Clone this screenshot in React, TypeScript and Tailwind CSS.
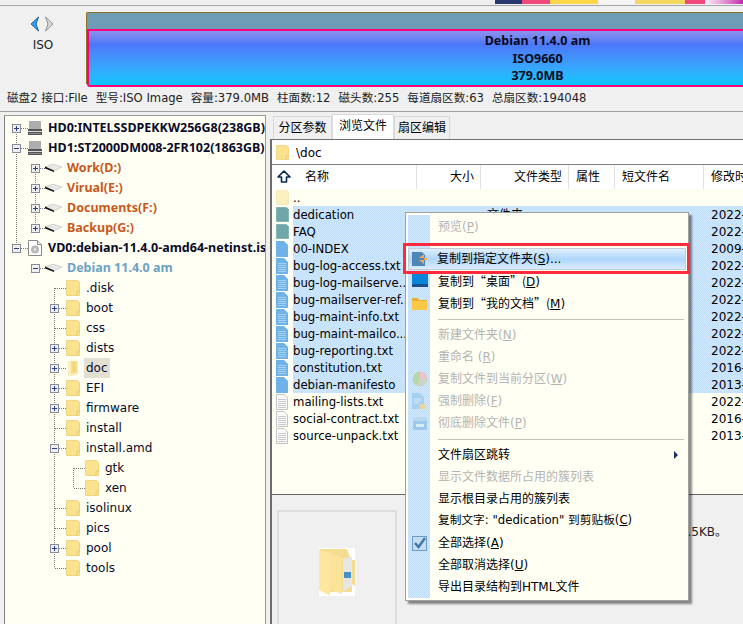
import type { ReactNode } from "react";

const font = "[font-family:'DejaVu_Sans','Noto_Sans_CJK_SC',sans-serif]";
const boldFont = "font-bold [font-family:'Noto_Sans','Noto_Sans_CJK_SC',sans-serif]";
const treeBold = `${boldFont} text-[12.5px]`;
const dotted = "[background:repeating-conic-gradient(#bfdefb_0_25%,#d2e9fd_0_50%)_0_0/2px_2px]";

const Folder = ({ size = 14, pale = false, tint = false }: { size?: number; pale?: boolean; tint?: boolean }) => (
  <svg width={size} height={size + 2} viewBox="0 0 14 16" className={pale ? "opacity-50" : ""}>
    <path d="M0.5 0.5H11.5L13.5 2.5V15.5H0.5Z" fill={tint ? "#6ea7a8" : "#fbe28f"} stroke={tint ? "#7fb2b4" : "#efd685"} />
    {!tint && <path d="M11 15.5V11.5Q12 10 13.5 11.5" fill="none" stroke="#e5c970" />}
  </svg>
);

const OpenFolder = () => (
  <svg width="14" height="16" viewBox="0 0 14 16">
    <path d="M2 1H12V14L6 16H2Z" fill="#fdeeb8" />
    <path d="M5 1H11V13H5Z" fill="#f9dc8a" />
    <path d="M7 2H9V12H7Z" fill="#f3d27c" />
  </svg>
);

const HardDisk = () => (
  <svg width="14" height="14" viewBox="0 0 14 14">
    <path d="M1 0H13V8H1Z" fill="#b8b8b8" />
    <path d="M1 1H13M1 3H13M1 5H13M1 7H13" stroke="#a2a2a2" />
    <path d="M0 8H14V14H0Z" fill="#555" />
    <path d="M0 10H14V11H0Z" fill="#d8d8d8" />
    <path d="M1 12H13V13H1Z" fill="#8a8a8a" />
  </svg>
);

const Partition = () => (
  <svg width="17" height="8" viewBox="0 0 17 8">
    <path d="M0 3L8 0L17 3L9 7Z" fill="#e8e8e8" stroke="#b0b0b0" strokeWidth="0.5" />
    <path d="M0 2.5L9 6.5V8L0 4.5Z" fill="#111" />
  </svg>
);

const IsoFile = () => (
  <svg width="14" height="16" viewBox="0 0 14 16">
    <path d="M0.5 0.5H9.5L13.5 4.5V15.5H0.5Z" fill="#fff" stroke="#8a8a8a" />
    <path d="M9.5 0.5V4.5H13.5" fill="#eee" stroke="#8a8a8a" />
    <circle cx="7" cy="9.5" r="4" fill="#b8b8b8" />
    <circle cx="7" cy="9.5" r="1.2" fill="#eee" />
  </svg>
);

const Connector = ({ exp, first, last, line }: { exp?: string; first?: boolean; last?: boolean; line?: boolean }) => {
  const dot = { stroke: "#777", strokeDasharray: "1 1" };
  return (
    <svg width="21" height="20" viewBox="0 0 21 20" className="shrink-0">
      {line && <line x1="9.5" y1={first ? 10 : 0} x2="9.5" y2={last ? 10 : 20} {...dot} />}
      <line x1="10" y1="10.5" x2="21" y2="10.5" {...dot} />
      {exp && (
        <>
          <rect x="5.5" y="6.5" width="8" height="8" fill="#f0f0f0" stroke="#8a8a9a" />
          <line x1="7" y1="10.5" x2="12" y2="10.5" stroke="#27408b" />
          {exp === "+" && <line x1="9.5" y1="8" x2="9.5" y2="13" stroke="#27408b" />}
        </>
      )}
    </svg>
  );
};

type TreeRow = {
  label: string;
  level: number;
  guides?: number[];
  exp?: string;
  first?: boolean;
  last?: boolean;
  line?: boolean;
  icon: ReactNode;
  cls?: string;
};

const folder = <Folder />;
const part = (
  <span className="-ml-[2px] flex">
    <Partition />
  </span>
);
const driveCls = `${treeBold} text-[#c8591d]`;

const treeRows: TreeRow[] = [
  { label: "HD0:INTELSSDPEKKW256G8(238GB)", level: 0, exp: "+", first: true, line: true, icon: <HardDisk />, cls: treeBold },
  { label: "HD1:ST2000DM008-2FR102(1863GB)", level: 0, exp: "-", line: true, icon: <HardDisk />, cls: treeBold },
  { label: "Work(D:)", level: 1, guides: [0], exp: "+", first: true, line: true, icon: part, cls: driveCls },
  { label: "Virual(E:)", level: 1, guides: [0], exp: "+", line: true, icon: part, cls: driveCls },
  { label: "Documents(F:)", level: 1, guides: [0], exp: "+", line: true, icon: part, cls: driveCls },
  { label: "Backup(G:)", level: 1, guides: [0], exp: "+", last: true, line: true, icon: part, cls: driveCls },
  { label: "VD0:debian-11.4.0-amd64-netinst.iso", level: 0, exp: "-", last: true, line: true, icon: <IsoFile />, cls: treeBold },
  { label: "Debian 11.4.0 am", level: 1, exp: "-", icon: part, cls: `${treeBold} text-[#6ca2c6]` },
  { label: ".disk", level: 2, first: true, line: true, icon: folder },
  { label: "boot", level: 2, exp: "+", line: true, icon: folder },
  { label: "css", level: 2, line: true, icon: folder },
  { label: "dists", level: 2, exp: "+", line: true, icon: folder },
  { label: "doc", level: 2, exp: "+", line: true, icon: <OpenFolder />, cls: "bg-[#e3e0d3]" },
  { label: "EFI", level: 2, exp: "+", line: true, icon: folder },
  { label: "firmware", level: 2, exp: "+", line: true, icon: folder },
  { label: "install", level: 2, line: true, icon: folder },
  { label: "install.amd", level: 2, exp: "-", line: true, icon: folder },
  { label: "gtk", level: 3, guides: [2], first: true, line: true, icon: folder },
  { label: "xen", level: 3, guides: [2], last: true, line: true, icon: folder },
  { label: "isolinux", level: 2, line: true, icon: folder },
  { label: "pics", level: 2, line: true, icon: folder },
  { label: "pool", level: 2, exp: "+", line: true, icon: folder },
  { label: "tools", level: 2, last: true, line: true, icon: folder },
];

const Tree = () => (
  <div className="ml-[4px] mt-[3px] w-[262px] shrink-0 overflow-hidden border-x border-t border-x-[#9a9a9a] border-t-[#9a9a9a] border-l-[#808080] bg-[#fffff3] pl-[2px] pt-[2px]">
    {treeRows.map((r) => (
      <div key={r.label} className="flex h-[20px] items-center whitespace-nowrap text-[12px] leading-[20px] text-[#0a0a2a]">
        <div className="flex shrink-0" style={{ width: r.level * 19 }}>
          {Array.from({ length: r.level }).map((_, i) => (
            <svg key={i} width="19" height="20" className="shrink-0">
              {(r.guides ?? []).includes(i) && <line x1="9.5" y1="0" x2="9.5" y2="20" stroke="#777" strokeDasharray="1 1" />}
            </svg>
          ))}
        </div>
        <Connector exp={r.exp} first={r.first} last={r.last} line={r.line} />
        <div className="flex h-[16px] w-[20px] shrink-0 items-center">{r.icon}</div>
        <span className={`-ml-[2px] px-[2px] ${r.cls ?? ""}`}>{r.label}</span>
      </div>
    ))}
  </div>
);

const BluePage = ({ lines = true }: { lines?: boolean }) => (
  <svg width="12" height="16" viewBox="0 0 12 16">
    <path d="M0 0H8L12 4V16H0Z" fill="#6db3e8" />
    {lines && <path d="M2 5.5H10M2 7.5H10M2 9.5H10M2 11.5H10M2 13.5H10" stroke="#a5d2f3" />}
  </svg>
);

const TextPage = () => (
  <svg width="12" height="16" viewBox="0 0 12 16">
    <path d="M0.5 0.5H8L11.5 4V15.5H0.5Z" fill="#fafafa" stroke="#c4c4c4" />
    <path d="M2 5.5H10M2 7.5H10M2 9.5H10M2 11.5H10M2 13.5H10" stroke="#c8c8c8" />
  </svg>
);

type FileRow = { name: string; date?: string; type?: string; sel?: boolean; icon: ReactNode };

const files: FileRow[] = [
  { name: "..", icon: <Folder size={13} pale /> },
  { name: "dedication", date: "2022-", type: "文件夹", sel: true, icon: <Folder size={13} tint /> },
  { name: "FAQ", date: "2022-", sel: true, icon: <Folder size={13} tint /> },
  { name: "00-INDEX", date: "2009-", sel: true, icon: <BluePage lines={false} /> },
  { name: "bug-log-access.txt", date: "2022-", sel: true, icon: <BluePage /> },
  { name: "bug-log-mailserve...", date: "2022-", sel: true, icon: <BluePage /> },
  { name: "bug-mailserver-ref...", date: "2022-", sel: true, icon: <BluePage /> },
  { name: "bug-maint-info.txt", date: "2022-", sel: true, icon: <BluePage /> },
  { name: "bug-maint-mailco...", date: "2022-", sel: true, icon: <BluePage /> },
  { name: "bug-reporting.txt", date: "2022-", sel: true, icon: <BluePage /> },
  { name: "constitution.txt", date: "2016-", sel: true, icon: <BluePage /> },
  { name: "debian-manifesto", date: "2013-", sel: true, icon: <BluePage lines={false} /> },
  { name: "mailing-lists.txt", date: "2022-", icon: <TextPage /> },
  { name: "social-contract.txt", date: "2016-", icon: <TextPage /> },
  { name: "source-unpack.txt", date: "2013-", icon: <TextPage /> },
];

const columns = [
  { label: "大小", w: "w-[64px]", cls: "justify-end pr-[6px]" },
  { label: "文件类型", w: "w-[88px]", cls: "justify-end pr-[6px]" },
  { label: "属性", w: "w-[46px]", cls: "pl-[7px]" },
  { label: "短文件名", w: "w-[89px]", cls: "pl-[7px]" },
];

const FileList = () => (
  <div className="flex-1 overflow-hidden bg-[#fffff3]">
    {files.map((f) => (
      <div key={f.name} className="flex h-[17px] items-center">
        <div className="flex w-[21px] shrink-0 justify-start pl-[4px]">{f.icon}</div>
        <div className={`flex h-full flex-1 items-center whitespace-nowrap text-black ${f.sel ? dotted : ""}`}>
          <span className="w-[194px] shrink-0 pt-[2px] text-[11.7px]">{f.name}</span>
          <span className="w-[224px] shrink-0 text-[12px]">{f.type}</span>
          <span className="text-[12px]">{f.date}</span>
        </div>
      </div>
    ))}
  </div>
);

const CopyToIcon = () => (
  <svg width="16" height="16" viewBox="0 0 16 16">
    <path d="M0 1H10L13 4V15H0Z" fill="#4f86b8" />
    <path d="M13 5L8 9H16V11H8L13 15Z" transform="translate(-1 -2)" fill="#f5a850" />
  </svg>
);

const DesktopIcon = () => (
  <svg width="16" height="15" viewBox="0 0 16 15">
    <path d="M0 0H16V12H0Z" fill="#0a84d8" />
    <path d="M0 10H16V13H0Z" fill="#1a4f90" />
  </svg>
);

const YellowOpen = () => (
  <svg width="16" height="13" viewBox="0 0 16 13">
    <path d="M0 1H6L7 3H15V5H0Z" fill="#e8ae2e" />
    <path d="M0 4H16L15 13H0Z" fill="#fcc846" />
  </svg>
);

const PieIcon = () => (
  <svg width="16" height="16" viewBox="0 0 16 16">
    <circle cx="8" cy="8" r="7.5" fill="#b9d6a8" />
    <path d="M8 8V0.5A7.5 7.5 0 0 1 15.5 8Z" fill="#e8c4cc" />
    <path d="M8 8H15.5A7.5 7.5 0 0 1 4 14Z" fill="#ccd4c4" />
  </svg>
);

const LockPageIcon = () => (
  <svg width="15" height="16" viewBox="0 0 15 16">
    <path d="M0 0H8L12 4V16H0Z" fill="#a8d0f0" />
    <path d="M2 6H9M2 8H9M2 10H7" stroke="#d4e8f8" />
    <path d="M8 11H14V16H8Z" fill="#e8d8a0" />
  </svg>
);

const BasketIcon = () => (
  <svg width="16" height="14" viewBox="0 0 16 14">
    <path d="M2 1H14L16 5H0Z" fill="#b8d8f0" />
    <path d="M1 5H15V14H1Z" fill="#9cc8ec" />
    <path d="M4 8H12V11H4Z" fill="#d8ecfa" />
  </svg>
);

const CheckIcon = () => (
  <svg width="15" height="15" viewBox="0 0 15 15">
    <rect x="0.5" y="0.5" width="14" height="14" fill="#c6dcf0" stroke="#6c9cc8" />
    <path d="M3 7L6.5 11L13 2" fill="none" stroke="#3f78ae" strokeWidth="2.4" />
  </svg>
);

type MenuEntry =
  | { sep: true }
  | {
      text: string;
      k?: string;
      tail?: string;
      off?: boolean;
      icon?: ReactNode;
      hot?: boolean;
      sub?: boolean;
      cjk?: boolean;
      small?: boolean;
      sep?: false;
    };

const menu: MenuEntry[] = [
  { text: "预览(", k: "P", tail: ")", off: true },
  { sep: true },
  { text: "复制到指定文件夹(", k: "S", tail: ")...", hot: true, icon: <CopyToIcon /> },
  { text: "复制到“桌面”(", k: "D", tail: ")", icon: <DesktopIcon />, cjk: true },
  { text: "复制到“我的文档”(", k: "M", tail: ")", icon: <YellowOpen />, cjk: true },
  { sep: true },
  { text: "新建文件夹(", k: "N", tail: ")", off: true },
  { text: "重命名 (", k: "R", tail: ")", off: true },
  { text: "复制文件到当前分区(", k: "W", tail: ")", off: true, icon: <PieIcon /> },
  { text: "强制删除(", k: "F", tail: ")", off: true, icon: <LockPageIcon /> },
  { text: "彻底删除文件(", k: "P", tail: ")", off: true, icon: <BasketIcon /> },
  { sep: true },
  { text: "文件扇区跳转", sub: true },
  { text: "显示文件数据所占用的簇列表", off: true },
  { text: "显示根目录占用的簇列表" },
  { text: "复制文字: \"dedication\" 到剪贴板(", k: "C", tail: ")", small: true },
  { text: "全部选择(", k: "A", tail: ")", icon: <CheckIcon /> },
  { text: "全部取消选择(", k: "U", tail: ")" },
  { text: "导出目录结构到HTML文件" },
];

const ContextMenu = () => (
  <div className="absolute left-[405px] top-[212px] h-[389px] w-[284px] border border-[#a0a0a0] bg-[#fffff3] px-[2px] pb-[2px] pt-[3px] shadow-[3px_3px_2px_rgba(0,0,0,0.45)]">
    <div className={`absolute bottom-[2px] left-[2px] top-[2px] w-[22px] ${dotted}`} />
    <div className="relative">
      {menu.map((m, i) =>
        m.sep ? (
          <div key={i} className="flex h-[10px] items-center pl-[30px] pr-[2px]">
            <div className="h-px flex-1 bg-[#c4c4bc]" />
          </div>
        ) : (
          <div
            key={i}
            className={`flex h-[22px] items-center whitespace-nowrap ${m.small ? "text-[11.7px]" : "text-[12px]"} ${
              m.off ? "text-[#b4b4b4]" : "text-black"
            } ${m.hot ? "rounded-[1px] border border-[#c0ccd8] bg-gradient-to-b from-[#e0effd] via-[#aed6fb] to-[#dcecfb]" : ""}`}
          >
            <div className={`flex shrink-0 items-center justify-center ${m.hot ? "w-[22px]" : "w-[23px]"}`}>{m.icon}</div>
            <div className={`${m.hot ? "pl-[6px]" : "pl-[7px]"}`}>
              <span className={m.cjk ? "[font-family:'Noto_Sans_CJK_SC',sans-serif]" : ""}>{m.text}</span>
              {m.k && <span className="underline">{m.k}</span>}
              {m.tail}
            </div>
            {m.sub && <div className="ml-auto mr-[8px] h-0 w-0 border-y-[4px] border-l-[4px] border-y-transparent border-l-[#12305e]" />}
          </div>
        ),
      )}
    </div>
  </div>
);

const tabs = [
  { label: "分区参数", w: "w-[59px]" },
  { label: "浏览文件", w: "w-[62px]", on: true },
  { label: "扇区编辑", w: "w-[56px]" },
];

const topStrip = [
  "w-[27px] bg-[#27396e]",
  "w-[28px] bg-[#f0487a]",
  "w-[48px] bg-[#ffd84a]",
  "w-[37px] bg-[#f6f6f6]",
  "w-[50px] bg-[#f5d862]",
  "w-[20px] bg-[#f0487a]",
  "w-[38px] bg-gradient-to-r from-[#f8f0f4] to-[#c020b0]",
];

export default function App() {
  return (
    <div className={`relative flex h-[624px] w-[743px] flex-col overflow-hidden bg-[#f0f0f0] text-black ${font}`}>
      <div className="flex h-[6px] shrink-0 justify-end border-b border-[#a8a8a8] pb-[1px]">
        {topStrip.map((c) => (
          <div key={c} className={c} />
        ))}
      </div>

      <div className="flex h-[81px] shrink-0 pt-[6px]">
        <div className="flex w-[86px] shrink-0 flex-col items-center pt-[4px]">
          <div className="mr-[2px] flex gap-[4px]">
            <svg width="10" height="16" viewBox="0 0 10 16">
              <path d="M8.5 1L1 8L8.5 15L6 8Z" fill="#38a4f0" stroke="#1c5fa8" strokeLinejoin="round" />
            </svg>
            <svg width="10" height="16" viewBox="0 0 10 16">
              <path d="M1.5 1L9 8L1.5 15L4 8Z" fill="#d8d8d8" stroke="#909090" strokeLinejoin="round" />
            </svg>
          </div>
          <div className="mt-[5px] text-[12px] leading-[16px] text-[#222]">ISO</div>
        </div>
        <div className="flex-1 overflow-hidden">
          <div className="flex h-[72px] w-[900px] flex-col rounded-tl-[2px] border-l border-t border-[#8c6f28]">
            <div className="h-[16px] shrink-0 bg-[#6e9bb6]" />
            <div
              className={`flex flex-1 flex-col items-center rounded-bl-[3px] border-[2px] border-r-0 border-[#ff0078] bg-gradient-to-b from-[#8d90ee] via-[#4c78f8] via-[25%] to-[#00c6ff] pt-[1px] text-[12.5px] leading-[17.5px] text-[#0a0a20] ${boldFont}`}
            >
              <div>Debian 11.4.0 am</div>
              <div>ISO9660</div>
              <div>379.0MB</div>
            </div>
          </div>
        </div>
      </div>

      <div className="flex h-[24px] shrink-0 items-center gap-[8px] whitespace-nowrap pl-[7px] text-[11.6px] text-[#222]">
        <span>磁盘2 接口:File</span>
        <span>型号:ISO Image</span>
        <span>容量:379.0MB</span>
        <span>柱面数:12</span>
        <span>磁头数:255</span>
        <span>每道扇区数:63</span>
        <span>总扇区数:194048</span>
      </div>

      <div className="flex min-h-0 flex-1 border-t border-[#a0a0a0]">
        <Tree />
        <div className="w-[4px] shrink-0" />
        <div className="flex min-w-0 flex-1 flex-col">
          <div className="flex h-[27px] shrink-0 items-end pl-[3px]">
            {tabs.map((t) => (
              <div
                key={t.label}
                className={`flex ${t.w} shrink-0 items-center justify-center border-x border-t border-[#d9d9d9] text-[12px] ${
                  t.on ? "h-[25px] bg-white pb-[3px]" : "h-[23px] bg-[#f0f0f0]"
                }`}
              >
                {t.label}
              </div>
            ))}
          </div>
          <div className="flex min-h-0 flex-1 flex-col border-l-2 border-t border-[#6e6e6e]">
            <div className="flex h-[25px] shrink-0 items-center gap-[7px] border-b border-[#808080] bg-white pl-[4px] text-[12px]">
              <Folder size={13} />
              <span className="pt-[1px]">\doc</span>
            </div>
            <div className="flex h-[24px] shrink-0 overflow-hidden bg-white text-[12px]">
              <div className="relative flex w-[145px] shrink-0 items-center border-r border-[#e0e0e0] pl-[33px]">
                <svg width="14" height="13" viewBox="0 0 14 13" className="absolute left-[5px] top-[5px]">
                  <path d="M7 1L13 7H9.5V12H4.5V7H1Z" fill="#fff" stroke="#0a2a50" strokeWidth="1.6" strokeLinejoin="round" />
                </svg>
                名称
              </div>
              {columns.map((c) => (
                <div key={c.label} className={`flex ${c.w} shrink-0 items-center border-r border-[#e0e0e0] ${c.cls}`}>
                  {c.label}
                </div>
              ))}
              <div className="flex shrink-0 items-center whitespace-nowrap pl-[7px]">修改时间</div>
            </div>
            <FileList />
            <div className="flex h-[130px] shrink-0 items-start justify-between border-t border-[#666] pl-[5px] pr-[16px] pt-[15px]">
              <div className="flex h-[120px] w-[120px] shrink-0 items-start justify-center border-2 border-[#dedede] pt-[36px]">
                <svg width="36" height="48" viewBox="0 0 36 48">
                  <path d="M0 0H36V48H0Z" fill="#fff" />
                  <path d="M1 1H28L32 12H36V38L33 36V44H5L1 40Z" fill="#f4dc90" />
                  <path d="M24 10L33 9V38L24 44Z" fill="#e6e6e4" />
                  <path d="M25 24H32V30H25Z" fill="#4a90c8" />
                  <path d="M6 3L23 10V46L6 40Z" fill="#fbe39a" />
                  <path d="M0 1L11 6V48L0 42Z" fill="#fde79f" />
                </svg>
              </div>
              <span className="mt-[14px] whitespace-nowrap text-[12px] leading-[16px] text-[#222]">0.5KB。</span>
            </div>
          </div>
        </div>
      </div>

      <ContextMenu />
      <div className="absolute left-[403px] top-[243px] h-[31px] w-[287px] border-[3px] border-[#ff2a3c]" />
    </div>
  );
}
